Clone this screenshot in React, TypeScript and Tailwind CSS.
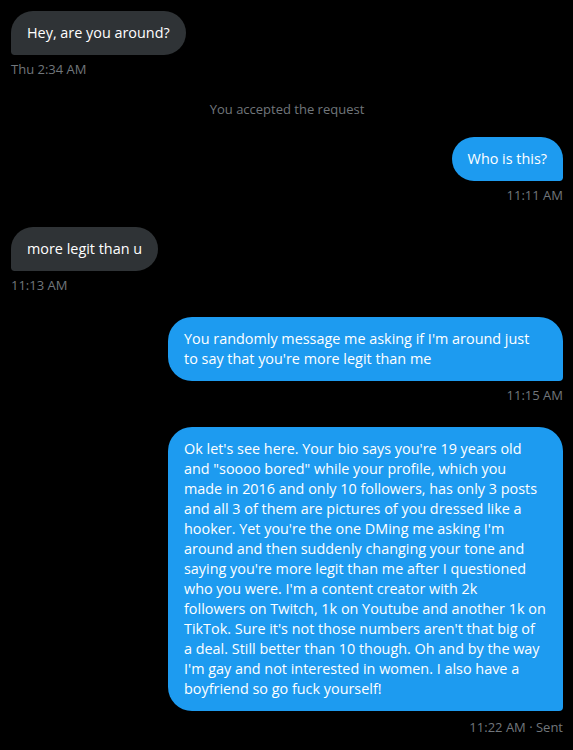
import React from "react";

const bigLines = [
  "Ok let's see here. Your bio says you're 19 years old",
  "and \"soooo bored\" while your profile, which you",
  "made in 2016 and only 10 followers, has only 3 posts",
  "and all 3 of them are pictures of you dressed like a",
  "hooker. Yet you're the one DMing me asking I'm",
  "around and then suddenly changing your tone and",
  "saying you're more legit than me after I questioned",
  "who you were. I'm a content creator with 2k",
  "followers on Twitch, 1k on Youtube and another 1k on",
  "TikTok. Sure it's not those numbers aren't that big of",
  "a deal. Still better than 10 though. Oh and by the way",
  "I'm gay and not interested in women. I also have a",
  "boyfriend so go fuck yourself!",
];

const midLines = [
  "You randomly message me asking if I'm around just",
  "to say that you're more legit than me",
];

function Lines({ lines }: { lines: string[] }) {
  return (
    <>
      {lines.map((l, i) => (
        <span key={i} className="block whitespace-nowrap">
          {l}
        </span>
      ))}
    </>
  );
}

function Stamp({ children, className = "" }: { children: React.ReactNode; className?: string }) {
  return (
    <div className={"text-[13px] leading-4 text-[#71767b] whitespace-nowrap " + className}>
      {children}
    </div>
  );
}

export default function App() {
  return (
    <div className="min-h-[750px] bg-black font-['Open_Sans',sans-serif] pl-[11px] pr-[10px] pt-[11px]">
      {/* Incoming 1 */}
      <div className="flex flex-col items-start">
        <div className="bg-[#2f3336] text-white text-[14.4px] leading-5 px-4 py-3 rounded-3xl rounded-bl-[4px] whitespace-nowrap">
          Hey, are you around?
        </div>
        <Stamp className="mt-[6px]">Thu 2:34 AM</Stamp>
      </div>

      {/* System */}
      <div className="mt-6 text-center text-[13px] leading-4 text-[#71767b]">
        You accepted the request
      </div>

      {/* Outgoing 1 */}
      <div className="mt-5 flex flex-col items-end">
        <div className="bg-[#1d9bf0] text-white text-[14.4px] leading-5 px-4 py-3 rounded-3xl rounded-br-[4px] whitespace-nowrap">
          Who is this?
        </div>
        <Stamp className="mt-[6px]">11:11 AM</Stamp>
      </div>

      {/* Incoming 2 */}
      <div className="mt-6 flex flex-col items-start">
        <div className="bg-[#2f3336] text-white text-[14.4px] leading-5 px-4 py-3 rounded-3xl rounded-bl-[4px] whitespace-nowrap">
          more legit than u
        </div>
        <Stamp className="mt-[6px]">11:13 AM</Stamp>
      </div>

      {/* Outgoing 2 */}
      <div className="mt-6 flex flex-col items-end">
        <div className="w-[395px] bg-[#1d9bf0] text-white text-[14.4px] leading-5 px-4 py-3 rounded-3xl rounded-br-[4px]">
          <Lines lines={midLines} />
        </div>
        <Stamp className="mt-[6px]">11:15 AM</Stamp>
      </div>

      {/* Outgoing 3 */}
      <div className="mt-6 flex flex-col items-end">
        <div className="w-[395px] bg-[#1d9bf0] text-white text-[14.4px] leading-5 px-4 py-3 rounded-3xl rounded-br-[4px]">
          <Lines lines={bigLines} />
        </div>
        <Stamp className="mt-[8px]">11:22 AM · Sent</Stamp>
      </div>
    </div>
  );
}
